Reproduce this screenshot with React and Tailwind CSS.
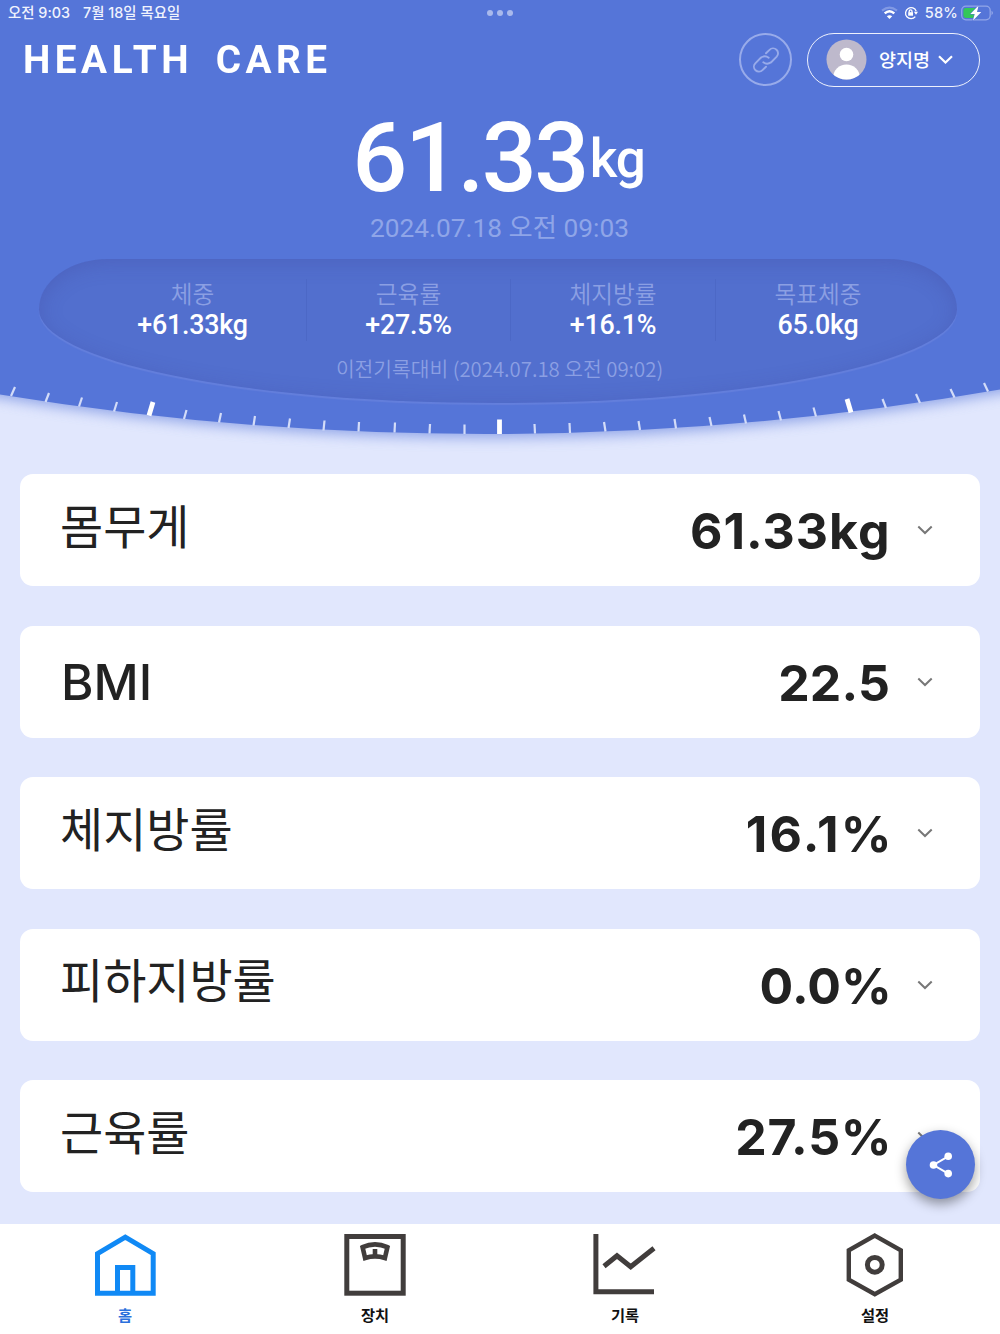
import React from 'react';

const minorTicks = [
  [11, 396, 15, 387], [45.5, 402, 49, 393], [79, 406.5, 82, 397.5], [114, 411.5, 117, 402],
  [184, 419, 186.5, 410], [219, 422.5, 221, 413], [253.5, 425.5, 255, 416], [288.5, 428, 290, 418.5],
  [323.5, 430.5, 324.5, 420.5], [358.5, 431.5, 359, 422], [394.5, 432.5, 395, 422.5],
  [429.5, 433.5, 430, 424], [464.5, 434, 464.5, 424.5], [535, 433.5, 534.5, 424],
  [570, 433, 569.5, 423], [605.5, 431.5, 604, 422], [640, 430, 638.5, 421], [676, 428.5, 674.5, 419],
  [711.5, 426, 709.5, 417], [746, 423.5, 744, 414.5], [781, 420.5, 778.5, 411],
  [816, 416.5, 813.5, 407.5], [886, 408, 882.5, 399], [920, 403, 916, 394], [954.5, 397.5, 950.5, 389],
  [988, 391.5, 984, 383],
];

const stats = [
  ['체중', '+61.33kg', 'w-[227px]'],
  ['근육률', '+27.5%', 'w-[204px]'],
  ['체지방률', '+16.1%', 'w-[205px]'],
  ['목표체중', '65.0kg', 'w-[205px]'],
];

const cards = [
  ['몸무게', '61.33kg', 'tracking-[1px] -mr-[.6px]'],
  ['BMI', '22.5', 'tracking-[.1px] mr-0'],
  ['체지방률', '16.1%', 'tracking-[2.2px] -mr-[3.8px]'],
  ['피하지방률', '0.0%', 'tracking-[.1px] -mr-[2px]'],
  ['근육률', '27.5%', 'tracking-[.7px] -mr-[2.3px]'],
];

function Gauge() {
  return (
    <svg className="absolute inset-0 h-[460px] w-[1000px]" viewBox="0 0 1000 460" fill="none">
      <defs>
        <filter id="soft" x="-5%" y="-5%" width="110%" height="115%">
          <feGaussianBlur stdDeviation="7" />
        </filter>
      </defs>
      <path d="M-40 -40H1040V382A3000 3000 0 0 1 -40 387Z" fill="#5575d8" opacity=".6" filter="url(#soft)" transform="translate(0 4)" />
      <path d="M0 0H1000V389.5A3000 3000 0 0 1 0 394.5Z" fill="#5575d8" />
      <g stroke="#d3dcf8" strokeWidth="2.2">
        {minorTicks.map(([a, b, c, d]) => <path key={a} d={`M${a} ${b}L${c} ${d}`} />)}
      </g>
      <path d="M149 415.5L153 402M499.5 434V419.5M851 412.5L847 399" stroke="#fff" strokeWidth="4.8" />
    </svg>
  );
}

function StatusBar() {
  return (
    <div className="relative flex h-6 items-center px-2 font-['Inter','Noto_Sans_CJK_KR',sans-serif] text-[14px] font-medium leading-6 text-[#f0f3fd]">
      <span className="w-[75px] whitespace-nowrap pt-[2px] text-[14.4px]">오전 9:03</span>
      <span className="whitespace-nowrap pt-[2px] text-[14.4px]">7월 18일 목요일</span>
      <div className="absolute left-[487px] top-[10px] flex gap-[4px]">
        {[0, 1, 2].map((i) => <i key={i} className="size-[6px] rounded-full bg-[#a9b9ec]" />)}
      </div>
      <div className="ml-auto flex items-center pt-px">
        <svg className="h-[14px] w-[17px]" viewBox="0 0 17 14" fill="none">
          <path d="M1 4.6Q8.5-1.4 16 4.6" stroke="#8199e4" strokeWidth="2" />
          <path d="M3.7 7.4Q8.5 3 13.3 7.4" stroke="#fff" strokeWidth="2.4" />
          <path d="M5.8 10.3Q8.5 8 11.2 10.3L8.5 13Z" fill="#fff" />
        </svg>
        <svg className="ml-[6px] size-[14px]" viewBox="0 0 14 14" fill="none" stroke="#fff" strokeWidth="1.3">
          <path d="M12.2 5.2A5.5 5.5 0 1 0 11.3 10.7" />
          <path d="M9.9 5.8h4.1l-2 2.9z" fill="#fff" stroke="none" />
          <path d="M5.2 6.6V5.3a1.4 1.4 0 0 1 2.8 0v1.3" />
          <rect x="4.2" y="6.2" width="4.8" height="3.5" fill="#fff" stroke="none" />
        </svg>
        <span className="ml-[7px] text-[14.6px] tracking-[.2px]">58%</span>
        <svg className="-mr-[2px] ml-[3px] h-[16px] w-[33px]" viewBox="0 0 33 16" fill="none">
          <rect x=".7" y="1.2" width="28.5" height="13.6" rx="4.2" stroke="#92a6e8" strokeWidth="1.3" />
          <path d="M30.5 5.8q3 2.2 0 4.4z" fill="#92a6e8" />
          <rect x="2.4" y="3" width="14.5" height="10" rx="2.4" fill="#34c759" />
          <path d="M17.6.5L9.4 9h4.3L12 15.5L20.3 7H16z" fill="#fff" stroke="#5575d8" strokeWidth="1" paintOrder="stroke" />
        </svg>
      </div>
    </div>
  );
}

function Header() {
  return (
    <header className="relative h-[474px] shrink-0">
      <Gauge />
      <div className="relative">
        <StatusBar />
        <div className="flex h-[71px] items-center pl-[23px] pr-5">
          <h1 className="flex origin-left scale-x-[.98] gap-[23px] font-['Roboto',sans-serif] text-[39.5px] font-bold leading-none tracking-[4.6px] text-white">
            <span>HEALTH</span>
            <span>CARE</span>
          </h1>
          <button className="ml-auto flex size-[53px] items-center justify-center rounded-full border-2 border-[#98abea]">
            <svg className="size-[28px]" viewBox="0 0 28 28" fill="none" stroke="#98abea" strokeWidth="1.9" strokeLinecap="round">
              <path d="M14 7.3L17.5 3.9A4.9 4.9 0 0 1 24.7 10.7L19 16.4Q15 19 11.3 16.3" />
              <path d="M14 20.7L10.5 24.1A4.9 4.9 0 0 1 3.3 17.3L9 11.6Q13 9 16.7 11.7" />
            </svg>
          </button>
          <button className="ml-[15px] flex h-[54px] w-[173px] items-center rounded-full border-[1.5px] border-[#eef1fd] pl-[18px] text-white">
            <svg className="size-[41px]" viewBox="0 0 41 41">
              <defs><clipPath id="face"><circle cx="20.5" cy="20.5" r="20" /></clipPath></defs>
              <g clipPath="url(#face)">
                <rect width="41" height="41" fill="#beb9cc" />
                <circle cx="20.5" cy="15.5" r="6.8" fill="#fff" />
                <ellipse cx="20.5" cy="38" rx="13.3" ry="12.5" fill="#fff" />
              </g>
            </svg>
            <span className="ml-3 font-['Noto_Sans_CJK_KR',sans-serif] text-[18.5px] font-medium leading-none">양지명</span>
            <svg className="ml-[8px] h-[9px] w-[15px]" viewBox="0 0 15 9" fill="none" stroke="#fff" strokeWidth="2.2"><path d="M1 1.2L7.5 7.5L14 1.2" /></svg>
          </button>
        </div>
        <div className="flex h-[118px] items-center justify-center pr-[3px] pt-[8px] font-['Roboto',sans-serif] font-medium text-white">
          <span className="text-[97px] leading-none tracking-[-2.6px]">61.33</span>
          <span className="ml-[3px] pt-[2px] text-[53px] leading-none tracking-[-1.2px]">kg</span>
        </div>
        <p className="h-[46px] pr-px text-center font-['Roboto','Noto_Sans_CJK_KR',sans-serif] text-[26.3px] leading-[31px] text-[#8fa5e8]">2024.07.18 오전 09:03</p>
        <section className="ml-[39px] flex h-[144px] w-[918px] flex-col rounded-[7.5%_7.5%_50%_50%/35%_35%_65%_65%] bg-[#526fce] shadow-[0_2px_1px_#647fdc,inset_0_4px_20px_rgba(65,70,150,.28)]">
          <div className="flex pl-[40px] pt-[20px]">
            {stats.map(([label, value, width], i) => (
              <div key={label} className={`relative flex flex-col items-center ${width} ${i ? 'border-l border-[#4c68c6]' : ''}`}>
                <span className="font-['Noto_Sans_CJK_KR',sans-serif] text-[23.7px] font-[350] leading-[28px] text-[#8b9fe3]">{label}</span>
                <span className="pt-[2px] font-['Roboto',sans-serif] text-[26.8px] font-medium leading-[32px] tracking-[-.2px] text-white">{value}</span>
              </div>
            ))}
          </div>
          <p className="mt-[13px] pl-[3px] text-center font-['Noto_Sans_CJK_KR',sans-serif] text-[20.35px] font-[350] leading-[28px] text-[#8b9fe3]">이전기록대비 (2024.07.18 오전 09:02)</p>
        </section>
      </div>
    </header>
  );
}

function Card({ label, value, spacing }) {
  return (
    <article className="flex h-[112px] w-full shrink-0 items-center rounded-[13px] bg-white pl-[40px] pr-[47px] text-[#222]">
      <h2 className={label === 'BMI' ? "pl-px pt-[3px] font-['Inter',sans-serif] text-[49.5px] font-[450] leading-none" : "-mt-3 font-['Noto_Sans_CJK_KR',sans-serif] text-[46.9px] leading-none"}>{label}</h2>
      <div className="ml-auto pt-0.5 font-['Inter',sans-serif] text-[50px] leading-none">
        <strong className={`block font-bold ${spacing}`}>{value}</strong>
      </div>
      <svg className="ml-[27px] h-[10px] w-[16px]" viewBox="0 0 16 10" fill="none" stroke="#777" strokeWidth="2"><path d="M1.3 1.5L8 8L14.7 1.5" /></svg>
    </article>
  );
}

const nav = [
  ['홈', <path key="h" d="M5.5 61.2V21.7L33.3 5.2L61.2 21.7V61.2ZM25.5 61V35.5H40.8V61" stroke="#1089f5" strokeWidth="5" />],
  ['장치', <g key="d" stroke="#413d3c" strokeWidth="5"><rect x="4.8" y="4.5" width="56.4" height="56.7" /><path d="M20.6 15.2Q33 9.6 45.4 15.2L42.9 26Q33 22.8 23.1 26Z" strokeWidth="4.6" /><path d="M33 17V24" strokeWidth="4.6" /></g>],
  ['기록', <g key="r" stroke="#413d3c" strokeWidth="5"><path d="M3.9 2V59.8H62" /><path d="M12 34.3L25 23.8L38.7 34.7L62 16.3" /></g>],
  ['설정', <g key="s" stroke="#413d3c" strokeWidth="4.4"><path d="M32.8 3.6L58.8 18.3V47.7L32.8 62.2L6.8 47.7V18.3Z" /><circle cx="32.8" cy="32.8" r="7.4" strokeWidth="5" /></g>],
];

export default function App() {
  return (
    <div className="relative flex h-[1334px] w-[1000px] flex-col overflow-hidden bg-[#e1e7fd]">
      <Header />
      <main className="flex h-[750px] shrink-0 flex-col gap-[39.6px] px-5">
        {cards.map(([label, value, spacing]) => <Card key={label} label={label} value={value} spacing={spacing} />)}
      </main>
      <nav className="grid h-[110px] grid-cols-4 bg-white">
        {nav.map(([label, drawing], i) => (
          <a key={label} className="flex flex-col items-center pt-[8px]">
            <svg className="h-[67px] w-[66px]" viewBox="0 0 66 67" fill="none">{drawing}</svg>
            <span className={`mt-[4px] font-['Noto_Sans_CJK_KR',sans-serif] text-[15.3px] font-bold leading-[22px] ${i ? 'text-[#111]' : 'text-[#2b70dc]'}`}>{label}</span>
          </a>
        ))}
      </nav>
      <button className="absolute left-[906px] top-[1130px] flex size-[69px] items-center justify-center rounded-full bg-[#5575d8] shadow-[0_5px_12px_rgba(0,0,0,.38)]">
        <svg className="size-[26px]" viewBox="0 0 26 26" fill="#fff" stroke="#fff" strokeWidth="2">
          <path d="M20.2 4.3L5.5 13L20.2 21.6" fill="none" />
          <g stroke="none"><circle cx="20.2" cy="4.3" r="3.8" /><circle cx="5.5" cy="13" r="3.8" /><circle cx="20.2" cy="21.6" r="3.8" /></g>
        </svg>
      </button>
    </div>
  );
}
